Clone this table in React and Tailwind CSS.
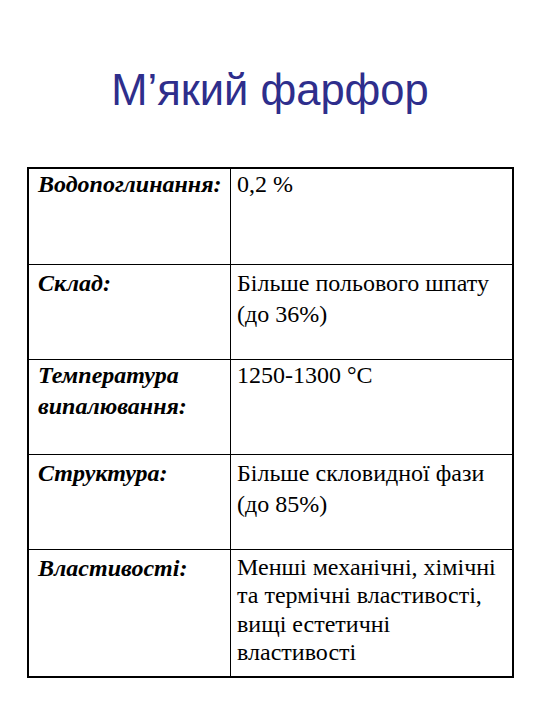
import React from "react";

const rows = [
  { label: ["Водопоглинання:"], value: ["0,2 %"], h: "h-[95px]", pt: "pt-0" },
  { label: ["Склад:"], value: ["Більше польового шпату", "(до 36%)"], h: "h-[95px]", pt: "pt-[3px]" },
  { label: ["Температура", "випалювання:"], value: ["1250-1300 °C"], h: "h-[95px]", pt: "pt-0" },
  { label: ["Структура:"], value: ["Більше скловидної фази", "(до 85%)"], h: "h-[95px]", pt: "pt-[3px]" },
  {
    label: ["Властивості:"],
    value: ["Менші механічні, хімічні", "та термічні властивості,", "вищі естетичні", "властивості"],
    h: "h-[127px]",
    pt: "pt-[3px]",
    tight: true,
  },
];

export default function App() {
  return (
    <div className="w-[540px] h-[720px] bg-white flex flex-col items-center">
      <h1 className="mt-[69px] text-[43.5px] leading-none text-[#2e2e8c] font-[family-name:Liberation_Sans,Arial,sans-serif]">
        М’який фарфор
      </h1>
      <div className="mt-[54px] ml-[1px] w-[487px] border-2 border-black font-[family-name:Liberation_Serif,Times_New_Roman,serif] text-[24px] text-black">
        {rows.map((r, i) => (
          <div key={i} className={`flex ${r.h} ${i > 0 ? "border-t border-black" : ""}`}>
            <div className={`w-[202px] shrink-0 border-r border-black pl-[9px] ${r.pt} font-bold italic leading-[31px]`}>
              {r.label.map((t, j) => (
                <div key={j}>{t}</div>
              ))}
            </div>
            <div className={`flex-1 pl-[6px] ${r.pt} ${r.tight ? "leading-[28.5px]" : "leading-[31px]"}`}>
              {r.value.map((t, j) => (
                <div key={j} className="whitespace-nowrap">{t}</div>
              ))}
            </div>
          </div>
        ))}
      </div>
    </div>
  );
}
